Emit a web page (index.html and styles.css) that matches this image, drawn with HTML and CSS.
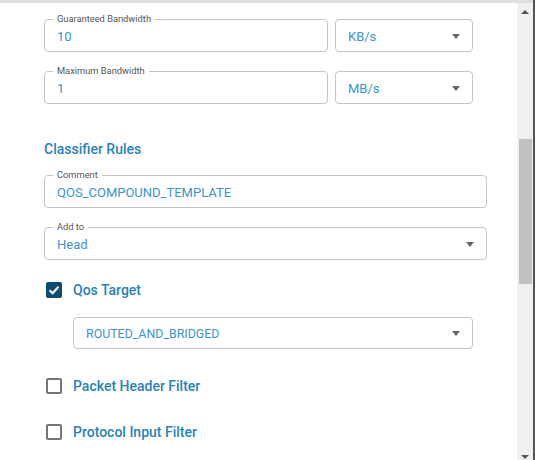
FILE: index.html
```html
<!DOCTYPE html>
<html>
<head>
<meta charset="utf-8">
<link rel="stylesheet" href="styles.css">
</head>
<body>
<div class="topstrip"></div>
<div class="frame">
  <div class="content">
    <div class="row first">
      <div class="field wide">
        <span class="flabel">Guaranteed Bandwidth</span>
        <span class="value">10</span>
      </div>
      <div class="field unit select">
        <span class="value">KB/s</span>
        <span class="caret"></span>
      </div>
    </div>
    <div class="row">
      <div class="field wide">
        <span class="flabel">Maximum Bandwidth</span>
        <span class="value">1</span>
      </div>
      <div class="field unit select">
        <span class="value">MB/s</span>
        <span class="caret"></span>
      </div>
    </div>

    <h2 class="heading">Classifier Rules</h2>

    <div class="field full">
      <span class="flabel">Comment</span>
      <span class="value">QOS_COMPOUND_TEMPLATE</span>
    </div>
    <div class="field full select gap">
      <span class="flabel">Add to</span>
      <span class="value">Head</span>
      <span class="caret"></span>
    </div>

    <div class="check-row cr1">
      <span class="box checked">
        <svg width="12" height="10" viewBox="0 0 12 10"><path d="M1.5 5.2 L4.6 8.2 L10.5 1.8" fill="none" stroke="#fff" stroke-width="2"/></svg>
      </span>
      <span class="clabel">Qos Target</span>
    </div>
    <div class="field target select">
      <span class="value small">ROUTED_AND_BRIDGED</span>
      <span class="caret"></span>
    </div>

    <div class="check-row cr2">
      <span class="box"></span>
      <span class="clabel">Packet Header Filter</span>
    </div>
    <div class="check-row cr3">
      <span class="box"></span>
      <span class="clabel">Protocol Input Filter</span>
    </div>
  </div>
  <div class="scrollbar">
    <div class="sb-btn"><span class="up"></span></div>
    <div class="sb-track"><div class="thumb"></div></div>
    <div class="sb-btn bottom"><span class="down"></span></div>
  </div>
  <div class="edge"></div>
</div>
</body>
</html>
```
FILE: styles.css
```css
* { box-sizing: border-box; }
html, body { margin: 0; padding: 0; background: #fff; }
body {
  width: 535px;
  height: 460px;
  overflow: hidden;
  font-family: Roboto, "Liberation Sans", sans-serif;
}
.topstrip {
  height: 3px;
  background: #dde0e3;
  width: 533px;
}
.frame {
  display: flex;
  height: 457px;
}
.content {
  width: 517px;
  padding-left: 44px;
  padding-top: 16px;
}
.row {
  display: flex;
  gap: 7px;
}
.row + .row { margin-top: 19px; }
.field {
  position: relative;
  height: 33px;
  border: 1px solid #c6c6c6;
  border-radius: 4px;
  display: flex;
  align-items: center;
  padding-left: 12px;
  padding-right: 12px;
}
.wide { width: 284px; }
.unit { width: 138px; }
.full { width: 443px; }
.gap { margin-top: 19px; }
.flabel {
  position: absolute;
  top: -7px;
  left: 8px;
  padding: 0 4px;
  background: #fff;
  font-size: 9.3px;
  line-height: 12px;
  color: #555;
}
.value {
  font-size: 13px;
  color: #3d94c7;
  flex: 1;
  padding-top: 1px;
}
.value.small { font-size: 12.4px; }
.caret {
  width: 0;
  height: 0;
  border-left: 4.5px solid transparent;
  border-right: 4.5px solid transparent;
  border-top: 5px solid #666;
  margin-top: 1px;
}
.heading {
  margin: 35px 0 0 0;
  font-size: 14px;
  line-height: 20px;
  font-weight: 500;
  color: #2a82b6;
}
.heading + .field { margin-top: 16px; }
.check-row {
  display: flex;
  align-items: center;
  height: 20px;
}
.cr1 { margin-top: 20px; }
.cr2 { margin-top: 27px; }
.cr3 { margin-top: 26px; }
.box {
  width: 16px;
  height: 16px;
  margin-left: 2px;
  border: 2px solid #767676;
  border-radius: 2px;
  display: flex;
  align-items: center;
  justify-content: center;
}
.box.checked {
  background: #0f4c75;
  border-color: #0f4c75;
}
.clabel {
  margin-left: 11px;
  font-size: 14px;
  font-weight: 500;
  color: #2a82b6;
}
.target {
  margin-top: 17px;
  margin-left: 29px;
  width: 400px;
  height: 32px;
}
.scrollbar {
  width: 16px;
  background: #f0f0f0;
  display: flex;
  flex-direction: column;
}
.sb-btn {
  height: 17px;
  display: flex;
  justify-content: center;
  align-items: center;
}
.sb-btn.bottom { align-items: flex-end; padding-bottom: 1px; }
.up {
  width: 0; height: 0;
  border-left: 4px solid transparent;
  border-right: 4px solid transparent;
  border-bottom: 4px solid #555;
  margin-top: 1px;
}
.down {
  width: 0; height: 0;
  border-left: 4px solid transparent;
  border-right: 4px solid transparent;
  border-top: 4px solid #555;
}
.sb-track {
  flex: 1;
  padding: 119px 1px 0 2px;
}
.thumb {
  height: 145px;
  background: #c1c1c1;
}
.edge {
  width: 2px;
  background: #555;
  margin-top: -3px;
  height: 460px;
}
```
